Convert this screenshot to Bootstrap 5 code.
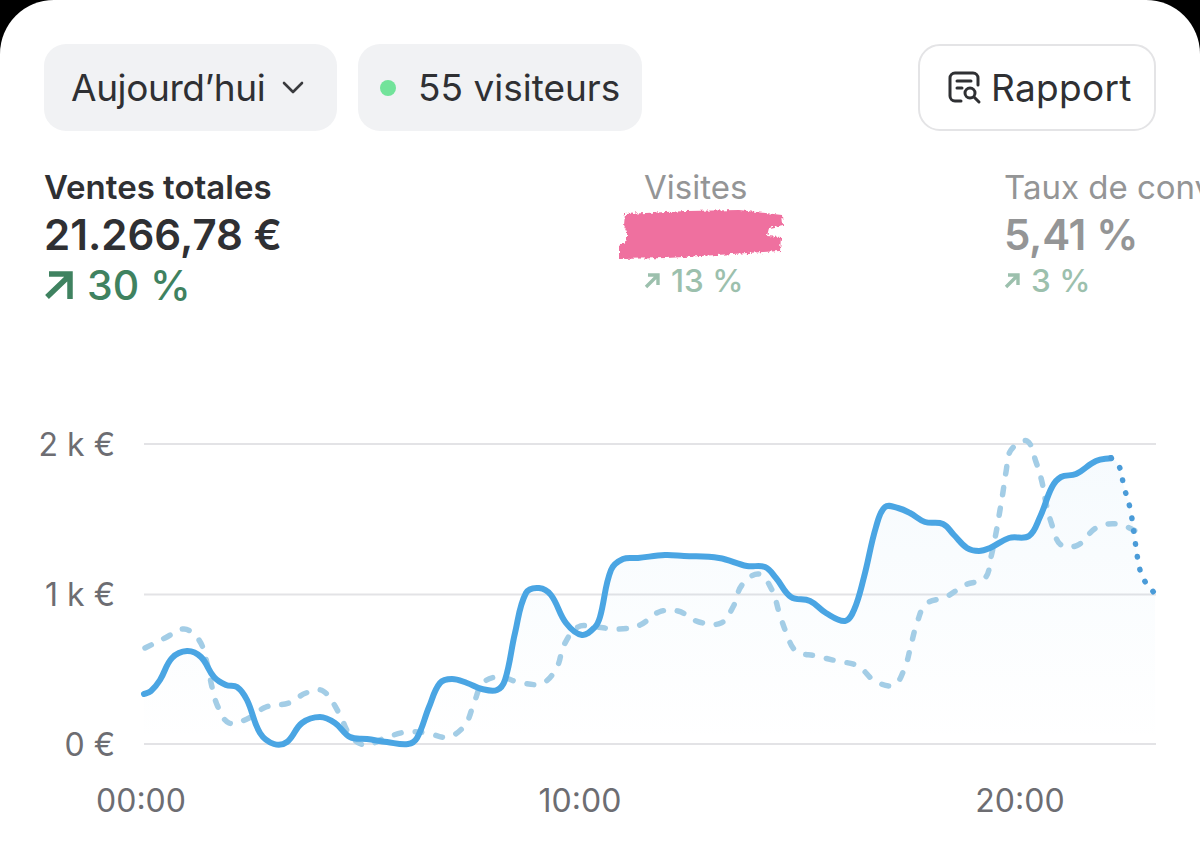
<!DOCTYPE html>
<html lang="fr">
<head>
  <meta charset="UTF-8">
  <title>Statistiques</title>
  <link href="https://cdn.jsdelivr.net/npm/bootstrap@5.3.3/dist/css/bootstrap.min.css" rel="stylesheet">
  <style>
    body {
      background: #000;
      font-family: Inter, "Liberation Sans", sans-serif;
      color: #2f3033;
    }
    .sheet {
      background: #fff;
      height: 850px;
      border-radius: 54px 54px 0 0;
      overflow: hidden;
      padding-top: 44px;
    }
    .toolbar {
      padding: 0 44px;
      gap: 21px;
    }
    .tool-btn {
      height: 87px;
      border-radius: 22px;
      font-size: 37px;
      color: #2f3033;
      white-space: nowrap;
      border: 0;
    }
    .tool-soft { background: #f1f2f4; }
    .tool-day { width: 293px; padding: 0 0 0 27px; gap: 17px; letter-spacing: -0.4px; }
    .tool-live { width: 284px; padding: 0 0 0 22px; gap: 22px; }
    .tool-report {
      width: 238px;
      background: #fff;
      border: 2px solid #e4e4e6;
      padding: 0 0 0 28px;
      gap: 9px;
      letter-spacing: 0.3px;
    }
    .live-dot {
      width: 16px;
      height: 16px;
      border-radius: 50%;
      background: #72e39a;
    }
    .stats {
      margin-top: 36px;
      padding-left: 44px;
    }
    .stat-main { width: 600px; }
    .stat-mid { width: 360px; }
    .stat-label {
      font-size: 33px;
      line-height: 40px;
      color: #949596;
    }
    .stat-value {
      font-size: 42px;
      line-height: 48px;
      margin-top: 4px;
      font-weight: 600;
      letter-spacing: -0.3px;
      color: #949596;
    }
    .stat-trend {
      font-size: 31.5px;
      line-height: 48px;
      font-weight: 500;
      color: #9cc0ad;
      gap: 11px;
      margin-top: -2px;
    }
    .stat-main .stat-label { color: #2f3033; font-weight: 600; }
    .stat-main .stat-value { color: #2f3033; letter-spacing: 0; }
    .stat-main .stat-trend { color: #3f8260; font-size: 41px; gap: 13px; margin-top: 2px; }
    .masked {
      display: block;
      margin-left: -27px;
      overflow: visible;
    }
    .chart {
      display: block;
      margin-top: 91px;
    }
    .chart text {
      font-size: 32px;
      fill: #6d6d72;
    }
  </style>
</head>
<body>

<div class="sheet">
  <!-- barre du haut -->
  <div class="toolbar d-flex align-items-center">
    <button type="button" class="btn tool-btn tool-soft tool-day d-flex align-items-center">
      Aujourd’hui
      <svg width="22" height="13" viewBox="0 0 22 13" fill="none" stroke="#3a3b3e" stroke-width="2.6" stroke-linecap="round" stroke-linejoin="round"><path d="M2 2l9 9 9-9"/></svg>
    </button>
    <button type="button" class="btn tool-btn tool-soft tool-live d-flex align-items-center">
      <span class="live-dot"></span>
      55 visiteurs
    </button>
    <button type="button" class="btn tool-btn tool-report d-flex align-items-center ms-auto">
      <svg width="34" height="34" viewBox="0 0 34 34" fill="none" stroke="#2f3033" stroke-width="3" stroke-linecap="round" stroke-linejoin="round">
        <path d="M13 30H7a5 5 0 0 1-5-5V7a5 5 0 0 1 5-5h18a5 5 0 0 1 5 5v7"/>
        <path d="M9 10h14M9 17h5"/>
        <circle cx="22" cy="22" r="5"/>
        <path d="M26 26l5 5"/>
      </svg>
      Rapport
    </button>
  </div>

  <!-- chiffres -->
  <div class="stats d-flex text-nowrap">
    <div class="stat-main flex-shrink-0">
      <div class="stat-label">Ventes totales</div>
      <div class="stat-value">21.266,78 €</div>
      <div class="stat-trend d-flex align-items-center">
        <svg width="30" height="28" viewBox="0 0 30 28" fill="none" stroke="#3f8260" stroke-width="5.5"><path d="M3 26L26 4M5 3h21v25"/></svg>
        30 %
      </div>
    </div>
    <div class="stat-mid flex-shrink-0">
      <div class="stat-label">Visites</div>
      <svg class="masked" width="168" height="52" viewBox="0 0 168 52">
        <defs>
          <filter id="rough" x="-5%" y="-15%" width="110%" height="130%">
            <feTurbulence type="fractalNoise" baseFrequency="0.3" numOctaves="3" seed="4"/>
            <feDisplacementMap in="SourceGraphic" scale="5"/>
          </filter>
        </defs>
        <path filter="url(#rough)" fill="#ef709f" d="M8 7L70 4 122 3 165 8 166 18 152 21 150 29 164 30 163 44 100 48 50 51 2 52 2 39 10 33 10 25 7 18 8 7Z"/>
      </svg>
      <div class="stat-trend d-flex align-items-center">
        <svg width="16" height="16" viewBox="0 0 16 16" fill="none" stroke="#9cc0ad" stroke-width="3.4"><path d="M2 14L13 3M4 2h10v10"/></svg>
        13 %
      </div>
    </div>
    <div class="flex-shrink-0">
      <div class="stat-label">Taux de conversion</div>
      <div class="stat-value">5,41 %</div>
      <div class="stat-trend d-flex align-items-center">
        <svg width="16" height="16" viewBox="0 0 16 16" fill="none" stroke="#9cc0ad" stroke-width="3.4"><path d="M2 14L13 3M4 2h10v10"/></svg>
        3 %
      </div>
    </div>
  </div>

  <!-- courbes -->
  <svg class="chart" id="chart" width="1200" height="450" viewBox="0 400 1200 450">
    <defs>
      <linearGradient id="area" x1="0" y1="0" x2="0" y2="1">
        <stop offset="0" stop-color="#4aa5e3" stop-opacity="0.05"/>
        <stop offset="1" stop-color="#4aa5e3" stop-opacity="0"/>
      </linearGradient>
    </defs>
    <path d="M144 444H1156M144 594.5H1156M144 744H1156" stroke="#e3e3e6" stroke-width="2" fill="none"/>
    <path id="fillArea" fill="url(#area)"/>
    <path id="lineBefore" fill="none" stroke="#a3cde6" stroke-width="5.5" stroke-linecap="round" stroke-dasharray="7 14"/>
    <path id="lineSales" fill="none" stroke="#4aa5e3" stroke-width="6" stroke-linecap="round"/>
    <path id="lineLive" fill="none" stroke="#4a9bd8" stroke-width="5.5" stroke-linecap="round" stroke-dasharray="0.5 12.5"/>
    <text x="115" y="456" text-anchor="end">2 k €</text>
    <text x="115" y="606" text-anchor="end">1 k €</text>
    <text x="115" y="756" text-anchor="end">0 €</text>
    <text x="141" y="812" text-anchor="middle">00:00</text>
    <text x="580" y="812" text-anchor="middle">10:00</text>
    <text x="1020" y="812" text-anchor="middle">20:00</text>
  </svg>
</div>

<script>
// points relevés sur la courbe, en px de la page
const ventes = [[144,694],[151,691],[160,680],[172,658],[187,651],[201,657],[214,677],[226,685],[237,687],[247,700],[260,733],[274,744],[287,742],[302,723],[320,717],[335,723],[350,737],[367,739],[387,742],[408,744],[417,738],[429,707],[440,683],[452,679],[467,683],[482,689],[497,690],[505,680],[515,633],[526,593],[539,588],[551,595],[566,623],[582,635],[595,627],[600,617],[611,570],[623,559],[638,558],[665,555],[684,556],[719,558],[747,566],[765,567],[776,578],[791,597],[810,601],[826,613],[845,621],[854,610],[864,577],[876,527],[885,507],[898,508],[910,513],[925,522],[943,524],[954,535],[967,548],[979,551],[990,548],[1009,538],[1029,536],[1040,517],[1052,487],[1061,477],[1076,474],[1096,461],[1111,458]];
const enCours = [[1111,458],[1119,466],[1124,487],[1130,508],[1134,533],[1138,560],[1143,578],[1155,594]];
const avant = [[145,648],[165,638],[184,629],[199,640],[207,663],[212,687],[218,707],[229,723],[247,719],[266,707],[289,703],[306,693],[323,691],[339,713],[350,735],[365,745],[385,738],[406,732],[427,733],[448,737],[465,725],[474,703],[483,683],[499,677],[522,683],[543,683],[557,667],[564,645],[578,627],[595,627],[619,629],[640,625],[659,612],[678,611],[699,622],[721,623],[733,607],[742,585],[759,574],[772,590],[779,612],[786,632],[796,651],[816,656],[837,661],[858,666],[875,681],[894,685],[905,667],[911,645],[917,623],[926,604],[946,597],[965,585],[985,578],[991,557],[996,533],[1000,510],[1003,492],[1006,472],[1011,450],[1027,441],[1036,462],[1042,482],[1046,503],[1052,525],[1061,545],[1078,545],[1096,528],[1117,524],[1138,532]];

function dist(a, b) {
  return Math.hypot(b[0] - a[0], b[1] - a[1]);
}

// spline avec tangentes à l'échelle de chaque segment (points mal espacés)
function courbe(pts) {
  const tangente = i => {
    const a = pts[i - 1] || pts[i];
    const b = pts[i + 1] || pts[i];
    const l = dist(a, pts[i]) + dist(pts[i], b);
    return [(b[0] - a[0]) / l, (b[1] - a[1]) / l];
  };
  let d = `M${pts[0][0]} ${pts[0][1]}`;
  for (let i = 0; i < pts.length - 1; i++) {
    const p1 = pts[i];
    const p2 = pts[i + 1];
    const s = dist(p1, p2) / 2.6;
    const t1 = tangente(i);
    const t2 = tangente(i + 1);
    d += `C${(p1[0] + t1[0] * s).toFixed(1)} ${(p1[1] + t1[1] * s).toFixed(1)} ${(p2[0] - t2[0] * s).toFixed(1)} ${(p2[1] - t2[1] * s).toFixed(1)} ${p2[0]} ${p2[1]}`;
  }
  return d;
}

document.getElementById("lineSales").setAttribute("d", courbe(ventes));
document.getElementById("lineLive").setAttribute("d", courbe(enCours));
document.getElementById("lineBefore").setAttribute("d", courbe(avant));
document.getElementById("fillArea").setAttribute("d", courbe(ventes.concat(enCours.slice(1))) + "L1155 744L144 744Z");
</script>

<script src="https://cdn.jsdelivr.net/npm/bootstrap@5.3.3/dist/js/bootstrap.bundle.min.js"></script>
</body>
</html>
